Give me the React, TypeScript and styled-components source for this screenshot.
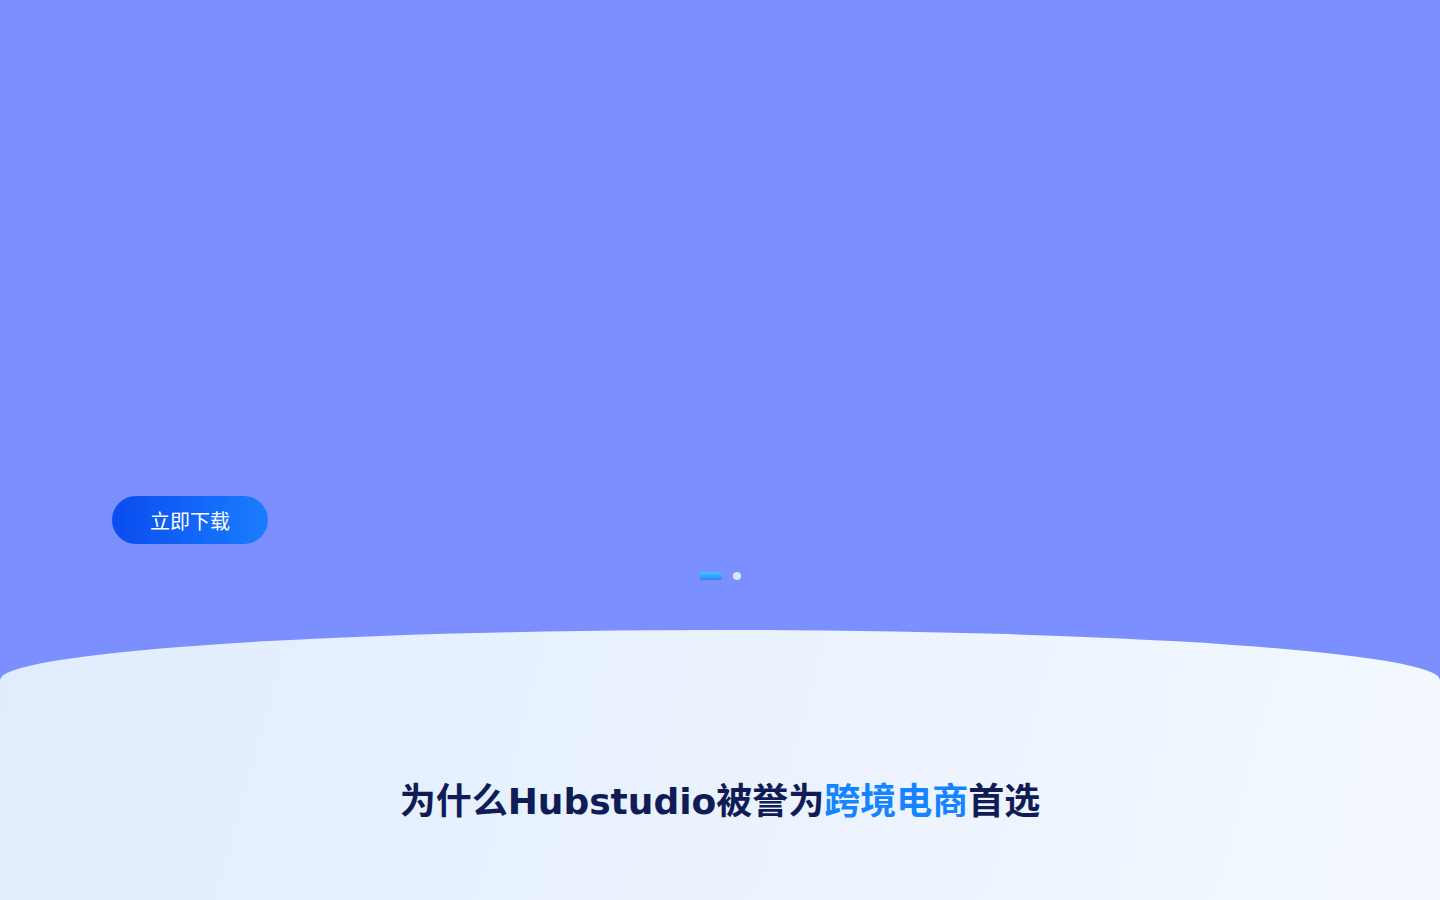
import styled, { createGlobalStyle } from "styled-components";

const GlobalStyle = createGlobalStyle`
  * {
    box-sizing: border-box;
  }
  html, body {
    margin: 0;
    padding: 0;
    background: #7b8fff;
    font-family: "DejaVu Sans", "Noto Sans CJK SC", sans-serif;
  }
`;

const slides = [0, 1];

const App = () => {
  const active = 0;

  return (
    <>
      <GlobalStyle />
      <Page>
        <Hero>
          <HeroInner>
            <DownloadButton>立即下载</DownloadButton>
          </HeroInner>
          <Dots>
            {slides.map((s) => (
              <Dot key={s} $active={s === active} />
            ))}
          </Dots>
        </Hero>
        <Features>
          <Title>
            为什么Hubstudio被誉为<Highlight>跨境电商</Highlight>首选
          </Title>
        </Features>
      </Page>
    </>
  );
};

export default App;

const Page = styled.div`
  width: 100%;
  height: 900px;
  overflow: hidden;
  display: flex;
  flex-direction: column;
  background: #7b8fff;
`;

const Hero = styled.section`
  height: 630px;
  flex-shrink: 0;
  display: flex;
  flex-direction: column;
  justify-content: flex-end;
  align-items: center;
  gap: 28px;
  padding-bottom: 50px;
`;

const HeroInner = styled.div`
  width: 1216px;
  display: flex;
`;

const DownloadButton = styled.button`
  width: 156px;
  height: 48px;
  border: none;
  border-radius: 24px;
  background: linear-gradient(90deg, #0a4cf0 0%, #1a7dff 100%);
  color: #ffffff;
  font-family: "DejaVu Sans", "Noto Sans CJK SC", sans-serif;
  font-size: 20px;
  cursor: pointer;
`;

const Dots = styled.div`
  display: flex;
  align-items: center;
  gap: 11px;
`;

const Dot = styled.span<{ $active: boolean }>`
  display: block;
  width: ${(p) => (p.$active ? "22px" : "8px")};
  height: 8px;
  border-radius: ${(p) => (p.$active ? "2px" : "50%")};
  background: ${(p) =>
    p.$active
      ? "linear-gradient(180deg, #43c6ff 0%, #2a86ff 100%)"
      : "rgba(236, 242, 255, 0.85)"};
`;

const Features = styled.section`
  flex: 1;
  display: flex;
  justify-content: center;
  padding-top: 150px;
  border-radius: 50% 50% 0 0 / 50px 50px 0 0;
  background: linear-gradient(105deg, #e1edfd 0%, #eaf2fe 50%, #f4f9ff 100%);
`;

const Title = styled.h2`
  margin: 0;
  font-size: 36px;
  line-height: 44px;
  font-weight: 700;
  color: #0f1c55;
`;

const Highlight = styled.span`
  color: #1684ff;
`;
